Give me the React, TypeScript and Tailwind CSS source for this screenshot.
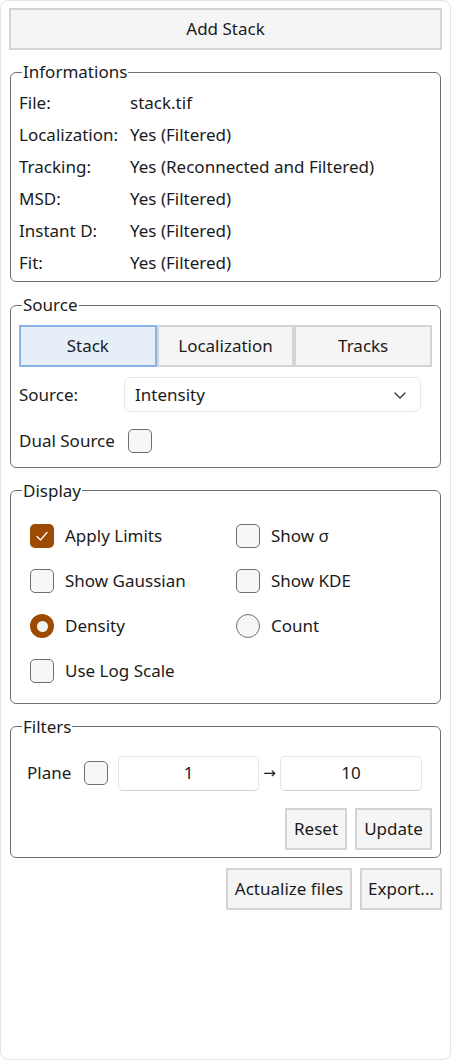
import React from "react";

const ORANGE = "bg-[#9d4b02]";

function Check({ checked = false }: { checked?: boolean }) {
  if (checked) {
    return (
      <span className="w-[24px] h-[24px] rounded-[5px] bg-[#9d4b02] flex items-center justify-center shrink-0">
        <svg width="14" height="14" viewBox="0 0 14 14" fill="none">
          <path d="M2 7.5 L5.5 11 L12 3.5" stroke="white" strokeWidth="1.3" strokeLinecap="round" strokeLinejoin="round" />
        </svg>
      </span>
    );
  }
  return <span className="w-[24px] h-[24px] rounded-[5px] border border-[#6e6e6e] bg-[#f7f7f7] shrink-0 block" />;
}

function Radio({ checked = false }: { checked?: boolean }) {
  if (checked) {
    return (
      <span className={`w-[24px] h-[24px] rounded-full ${ORANGE} flex items-center justify-center shrink-0`}>
        <span className="w-[11px] h-[11px] rounded-full bg-[#f3f3f3] block" />
      </span>
    );
  }
  return <span className="w-[24px] h-[24px] rounded-full border border-[#6e6e6e] bg-[#f7f7f7] shrink-0 block" />;
}

function Btn({ children, className = "" }: { children: React.ReactNode; className?: string }) {
  return (
    <button className={`h-[42px] bg-[#f5f5f5] border-2 border-[#d4d4d4] text-[#1b1b1b] flex items-center justify-center ${className}`}>
      {children}
    </button>
  );
}

function Group({ title, children, className = "" }: { title: string; children: React.ReactNode; className?: string }) {
  return (
    <fieldset className={`mx-[1px] border border-[#707070] rounded-[6px] px-0 ${className}`}>
      <legend className="ml-[11px] px-[1px] leading-[24px]">{title}</legend>
      {children}
    </fieldset>
  );
}

const info: [string, string][] = [
  ["File:", "stack.tif"],
  ["Localization:", "Yes (Filtered)"],
  ["Tracking:", "Yes (Reconnected and Filtered)"],
  ["MSD:", "Yes (Filtered)"],
  ["Instant D:", "Yes (Filtered)"],
  ["Fit:", "Yes (Filtered)"],
];

export default function App() {
  return (
    <div className="w-[451px] h-[1060px] bg-white border border-[#e4e4e4] rounded-[8px] font-['Noto_Sans',sans-serif] text-[17px] text-[#1b1b1b] px-[8px] pt-[7px] flex flex-col">
      <Btn className="w-full">Add Stack</Btn>

      <Group title="Informations" className="mt-[10px]">
        <div className="pt-[3px] pb-[2px] px-[8px]">
          {info.map(([k, v]) => (
            <div key={k} className="flex h-[32px] items-center">
              <span className="w-[111px]">{k}</span>
              <span>{v}</span>
            </div>
          ))}
        </div>
      </Group>

      <Group title="Source" className="mt-[11px]">
        <div className="pt-[8px] pb-[13px] pl-[8px] pr-[8px]">
          <div className="grid grid-cols-3 gap-0 h-[42px]">
            <button className="bg-[#e6eef8] border-2 border-[#8cb2ea] flex items-center justify-center">Stack</button>
            <button className="bg-[#f5f5f5] border-2 border-[#d4d4d4] flex items-center justify-center">Localization</button>
            <button className="bg-[#f5f5f5] border-2 border-[#d4d4d4] flex items-center justify-center">Tracks</button>
          </div>
          <div className="flex items-center mt-[10px]">
            <span className="w-[105px]">Source:</span>
            <div className="w-[297px] h-[35px] rounded-[6px] border border-[#e8e8e8] bg-white flex items-center justify-between pl-[10px] pr-[13px]">
              <span>Intensity</span>
              <svg width="14" height="14" viewBox="0 0 14 14" fill="none">
                <path d="M2 5 L7 10 L12 5" stroke="#333" strokeWidth="1.3" strokeLinecap="round" strokeLinejoin="round" />
              </svg>
            </div>
          </div>
          <div className="flex items-center mt-[16px]">
            <span className="w-[109px]">Dual Source</span>
            <Check />
          </div>
        </div>
      </Group>

      <Group title="Display" className="mt-[11px]">
        <div className="pt-[11px] pb-[9px] pl-[19px] pr-[8px] grid grid-cols-[206px_1fr]">
          <div className="h-[45px] flex items-center gap-[11px]"><Check checked /><span>Apply Limits</span></div>
          <div className="h-[45px] flex items-center gap-[11px]"><Check /><span>Show σ</span></div>
          <div className="h-[45px] flex items-center gap-[11px]"><Check /><span>Show Gaussian</span></div>
          <div className="h-[45px] flex items-center gap-[11px]"><Check /><span>Show KDE</span></div>
          <div className="h-[45px] flex items-center gap-[11px]"><Radio checked /><span>Density</span></div>
          <div className="h-[45px] flex items-center gap-[11px]"><Radio /><span>Count</span></div>
          <div className="h-[45px] flex items-center gap-[11px]"><Check /><span>Use Log Scale</span></div>
        </div>
      </Group>

      <Group title="Filters" className="mt-[11px]">
        <div className="pt-[17px] pb-[7px] pl-[16px] pr-[8px]">
          <div className="flex items-center">
            <span className="w-[57px]">Plane</span>
            <Check />
            <div className="ml-[10px] w-[141px] h-[35px] rounded-[5px] border border-[#e6e6e6] border-b-[#cfcfcf] bg-white flex items-center justify-center">1</div>
            <span className="w-[21px] text-center font-['DejaVu_Sans',sans-serif] text-[15px]">→</span>
            <div className="w-[142px] h-[35px] rounded-[5px] border border-[#e6e6e6] border-b-[#cfcfcf] bg-white flex items-center justify-center">10</div>
          </div>
          <div className="flex justify-end gap-[8px] mt-[17px]">
            <Btn className="w-[62px]">Reset</Btn>
            <Btn className="w-[77px]">Update</Btn>
          </div>
        </div>
      </Group>

      <div className="flex justify-end gap-[8px] mt-[10px]">
        <Btn className="w-[126px]">Actualize files</Btn>
        <Btn className="w-[82px]">Export...</Btn>
      </div>
    </div>
  );
}
